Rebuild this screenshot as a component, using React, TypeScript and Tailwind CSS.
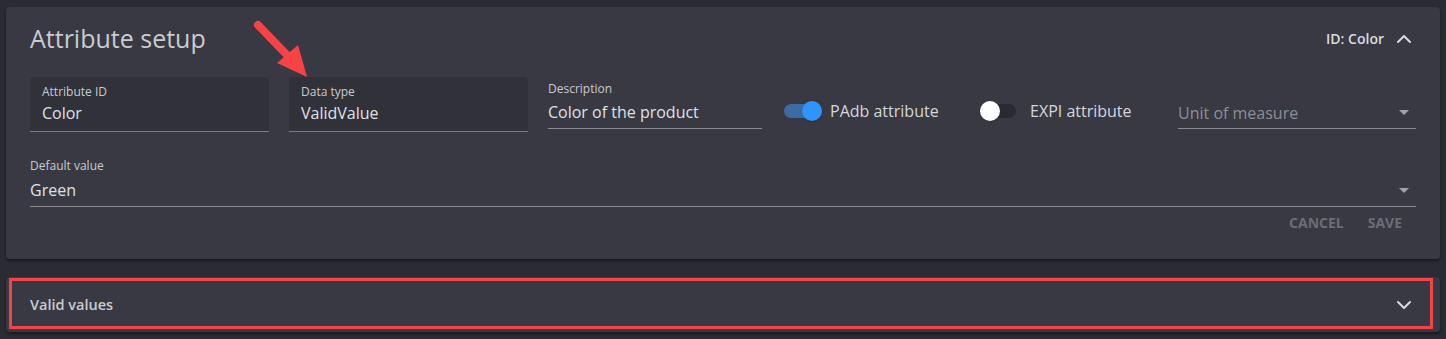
import React from "react";
import { FiChevronUp, FiChevronDown } from "react-icons/fi";

const FilledField = ({ label, value }: { label: string; value: string }) => (
  <div className="w-[239px] h-[55px] bg-[#303139] rounded-t border-b border-[#7d7e85] px-3 pt-[7px]">
    <div className="text-xs text-[#c9cbd1] leading-4">{label}</div>
    <div className="text-base text-[#dfe1e6] leading-6 mt-[1px]">{value}</div>
  </div>
);

const Toggle = ({ on, label }: { on: boolean; label: string }) => (
  <div className="flex items-center h-[36px]">
    <div className="relative w-[48px] h-[20px] flex items-center shrink-0">
      <div
        className={`ml-[9px] w-[32px] h-[14px] rounded-full ${
          on ? "bg-[#3c6ca3]" : "bg-[#2a2b31]"
        }`}
      />
      <div
        className={`absolute top-0 w-[20px] h-[20px] rounded-full shadow ${
          on ? "left-[27px] bg-[#3094ff]" : "left-[5px] bg-white"
        }`}
      />
    </div>
    <span className="ml-[7px] text-base text-[#d5d7dc] whitespace-nowrap">{label}</span>
  </div>
);

const Caret = () => (
  <div className="w-0 h-0 border-l-[5px] border-r-[5px] border-t-[5px] border-l-transparent border-r-transparent border-t-[#a3a4aa]" />
);

export default function App() {
  return (
    <div
      className="w-full h-[339px] bg-[#2b2c33] pt-[7px] px-[6px]"
      style={{ fontFamily: "'Open Sans', Lato, sans-serif" }}
    >
      {/* Attribute setup card */}
      <div className="relative h-[252px] bg-[#383942] rounded shadow-[0_2px_3px_rgba(0,0,0,0.45)] px-6">
        <div className="h-[64px] flex items-center justify-between">
          <h1 className="text-[25px] text-[#c9ccd2]">Attribute setup</h1>
          <div className="flex items-center gap-[8px]">
            <span className="text-sm font-semibold text-[#d9dbe0]">ID: Color</span>
            <FiChevronUp className="w-6 h-6 text-[#d9dbe0]" />
          </div>
        </div>

        <div className="flex items-start mt-[6px]">
          <FilledField label="Attribute ID" value="Color" />
          <div className="ml-5">
            <FilledField label="Data type" value="ValidValue" />
          </div>
          <div className="ml-5 w-[214px] h-[52px] border-b border-[#8a8b91] pt-[4px]">
            <div className="text-xs text-[#c9cbd1] leading-4">Description</div>
            <div className="text-base text-[#dfe1e6] leading-6 mt-[3px]">Color of the product</div>
          </div>
          <div className="ml-[13px] mt-[16px] w-[200px]">
            <Toggle on label="PAdb attribute" />
          </div>
          <div className="mt-[16px]">
            <Toggle on={false} label="EXPI attribute" />
          </div>
          <div className="ml-auto w-[238px] h-[52px] border-b border-[#8a8b91] flex items-center justify-between pt-[20px]">
            <span className="text-base text-[#8d8f96]">Unit of measure</span>
            <span className="mr-[7px]">
              <Caret />
            </span>
          </div>
        </div>

        <div className="mt-[21px] h-[54px] border-b border-[#8a8b91]">
          <div className="text-xs text-[#c9cbd1] leading-4 pt-[5px]">Default value</div>
          <div className="flex items-center justify-between mt-[4px]">
            <span className="text-base text-[#dfe1e6] leading-6">Green</span>
            <span className="mr-[7px]">
              <Caret />
            </span>
          </div>
        </div>

        <div className="flex justify-end gap-2 mt-[6px] pr-[6px]">
          <button className="px-2 h-[20px] text-sm font-bold text-[#6c6d74]">CANCEL</button>
          <button className="px-2 h-[20px] text-sm font-bold text-[#6c6d74]">SAVE</button>
        </div>

        {/* annotation arrow */}
        <svg className="absolute left-[243px] top-[11px]" width="70" height="66" viewBox="0 0 70 66">
          <line x1="9" y1="7" x2="38" y2="37" stroke="#f54346" strokeWidth="8" strokeLinecap="round" />
          <polygon points="28,45 49,27 58,59" fill="#f54346" />
        </svg>
      </div>

      {/* Valid values card */}
      <div className="relative mt-[18px] h-[55px] bg-[#383942] rounded shadow-[0_2px_3px_rgba(0,0,0,0.45)] px-6 flex items-center justify-between">
        <span className="text-[14.5px] font-semibold text-[#c9ccd2]">Valid values</span>
        <FiChevronDown className="w-6 h-6 text-[#d9dbe0]" />
        <div className="absolute left-[3px] top-[1px] w-[1424px] h-[51px] border-[3px] border-[#f44447]" />
      </div>
    </div>
  );
}
